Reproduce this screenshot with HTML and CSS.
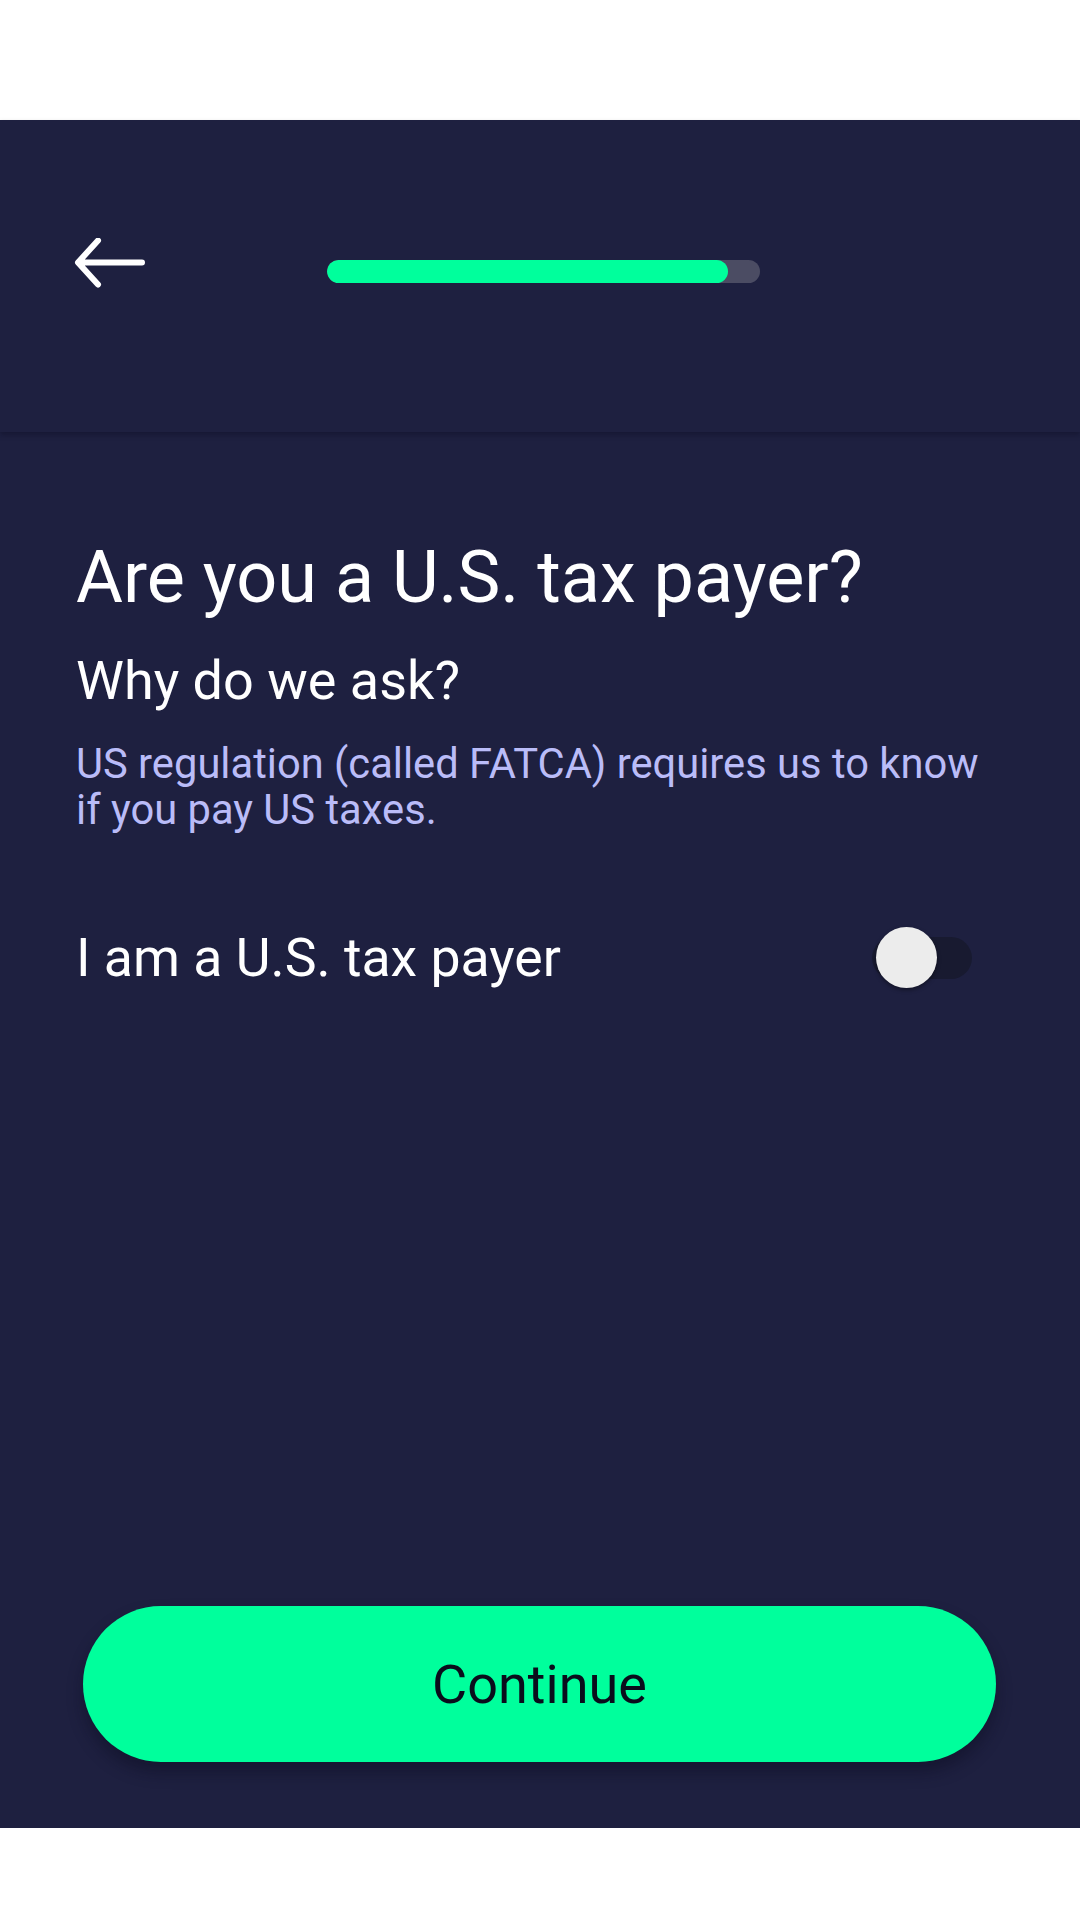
FILE: index.html
```html
<!DOCTYPE html>
<html>
<head>
<meta charset="utf-8">
<link rel="stylesheet" href="styles.css">
</head>
<body>
<div class="status"></div>
<div class="screen">
  <div class="header">
    <svg class="back" width="80" height="50" viewBox="0 0 80 50">
      <path d="M28 2.5 L8 24.5 L28 46.5 M8.5 24.5 H72" fill="none" stroke="#ffffff" stroke-width="6" stroke-linecap="round" stroke-linejoin="round"/>
    </svg>
    <div class="progress"><div class="progress-fill" style="width:401px"></div></div>
  </div>
  <div class="content">
    <h1 class="title">Are you a U.S. tax payer?</h1>
    <h2 class="subtitle">Why do we ask?</h2>
    <p class="body">US regulation (called FATCA) requires us to know if you pay US taxes.</p>
    <div class="toggle-row">
      <span class="toggle-label">I am a U.S. tax payer</span>
      <div class="switch">
        <div class="switch-track"></div>
        <div class="switch-thumb"></div>
      </div>
    </div>
  </div>
  <button class="cta">Continue</button>
</div>
<div class="bottom"></div>
</body>
</html>
```

FILE: styles.css
```css
html, body {
  margin: 0;
  padding: 0;
  background: #ffffff;
  font-family: Roboto, "Noto Sans", sans-serif;
}
.status {
  height: 120px;
  background: #ffffff;
}
.screen {
  height: 1708px;
  background: #1e2040;
  display: flex;
  flex-direction: column;
}
.header {
  height: 312px;
  box-sizing: border-box;
  display: flex;
  align-items: flex-start;
  padding-left: 70px;
  background: #1e2040;
  box-shadow: 0 3px 5px rgba(10, 10, 30, 0.35);
  position: relative;
  z-index: 1;
}
.back {
  margin-top: 118px;
  display: block;
}
.progress {
  margin-top: 140px;
  margin-left: 177px;
  width: 433px;
  height: 23px;
  border-radius: 12px;
  background: #4b4c63;
  overflow: hidden;
}
.progress-fill {
  height: 100%;
  border-radius: 12px;
  background: #00ff9c;
}
.content {
  padding: 0 76px;
  display: flex;
  flex-direction: column;
}
.title {
  margin: 104px 0 0;
  font-size: 72px;
  line-height: 84px;
  font-weight: 400;
  color: #ffffff;
}
.subtitle {
  margin: 30px 0 0;
  font-size: 54px;
  line-height: 62px;
  font-weight: 400;
  color: #ffffff;
}
.body {
  margin: 29px 0 0;
  font-size: 41.7px;
  line-height: 46px;
  color: #babcf8;
}
.toggle-row {
  margin-top: 85px;
  height: 80px;
  padding-right: 32px;
  display: flex;
  align-items: center;
  justify-content: space-between;
}
.toggle-label {
  font-size: 53.6px;
  line-height: 62px;
  color: #ffffff;
}
.switch {
  position: relative;
  width: 100px;
  height: 62px;
}
.switch-track {
  position: absolute;
  left: 0;
  top: 10px;
  width: 100px;
  height: 42px;
  border-radius: 21px;
  background: #181a30;
}
.switch-thumb {
  position: absolute;
  left: 4px;
  top: 0;
  width: 61px;
  height: 61px;
  border-radius: 50%;
  background: #ececec;
  box-shadow: 0 2px 4px rgba(0, 0, 0, 0.4);
}
.cta {
  margin: auto 84px 66px 83px;
  height: 156px;
  border: none;
  border-radius: 78px;
  background: #00ff9c;
  color: #0a0d1c;
  font-family: Roboto, "Noto Sans", sans-serif;
  font-size: 54px;
  box-shadow: 0 10px 16px rgba(10, 10, 30, 0.45);
}
.bottom {
  height: 92px;
  background: #ffffff;
}
```
